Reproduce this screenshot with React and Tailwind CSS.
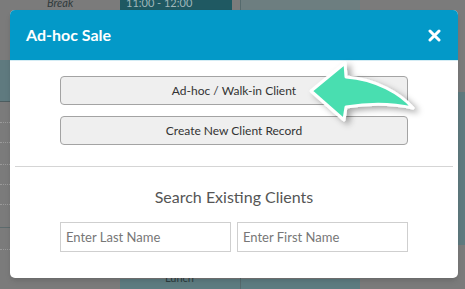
import React from "react";

function Arrow() {
  return (
    <svg
      className="pointer-events-none absolute left-0 top-0"
      width="465"
      height="289"
      viewBox="0 0 465 289"
    >
      <defs>
        <filter id="arrowShadow" x="-20%" y="-20%" width="160%" height="160%">
          <feDropShadow dx="4" dy="3" stdDeviation="3" floodColor="#000" floodOpacity="0.35" />
        </filter>
      </defs>
      <path
        d="M311 91 L345 63 L346 77 C376 79 401 94 413 108 C395 104 370 103 346 107 L344 120 Z"
        fill="#48deb0"
        stroke="#ffffff"
        strokeWidth="3"
        strokeLinejoin="round"
        filter="url(#arrowShadow)"
      />
    </svg>
  );
}

function Backdrop() {
  return (
    <div className="flex h-full w-full">
      {/* time column */}
      <div className="flex w-[120px] flex-col bg-[#7b7b7b]">
        <div className="h-[60px] pl-[47px] text-[11px] italic leading-[10px] text-[#2f3a3c]">
          <span className="-mt-[2px] block">Break</span>
        </div>
        <div className="h-[42px] border-b border-[#4d5d60] bg-[#5f7a7f]" />
        <div className="h-[21px] border-b border-dotted border-[#9a9a9a]" />
        <div className="h-[20px] border-b border-dotted border-[#9a9a9a]" />
        <div className="h-[22px] border-b border-dotted border-[#9a9a9a]" />
        <div className="h-[20px] border-b border-dotted border-[#9a9a9a]" />
        <div className="h-[20px] border-b border-dotted border-[#9a9a9a]" />
        <div className="h-[23px] border-b border-[#5d6b6d]" />
        <div className="h-[22px] border-b border-dotted border-[#9a9a9a]" />
        <div className="flex-1" />
      </div>
      {/* slot column */}
      <div className="flex w-[120px] flex-col bg-[#7b7b7b]">
        <div className="flex h-[10px]">
          <div className="w-[112px] bg-[#1f5962] pl-[6px] text-[11px] leading-[6px] text-[#9fb7ba]">
            11:00 - 12:00
          </div>
        </div>
        <div className="flex-1" />
        <div className="h-[10px] bg-[#5d7c81] pl-[45px] text-[11px] leading-[18px] text-[#2d3c3f]">
          <span className="-mt-[10px] block">Lunch</span>
        </div>
      </div>
      <div className="flex w-[120px] flex-col border-l border-[#556a6d] bg-[#7b7b7b]">
        <div className="h-[10px] bg-[#6d7e80]" />
        <div className="flex-1" />
        <div className="h-[10px] bg-[#5d7c81]" />
      </div>
      <div className="flex flex-1 flex-col bg-[#7b7b7b]">
        <div className="h-[92px]" />
        <div className="ml-auto h-[153px] w-[8px] bg-[#5f7a7f]" />
      </div>
    </div>
  );
}

export default function App() {
  return (
    <div className="relative h-[289px] w-[465px] overflow-hidden font-['Lato',sans-serif]">
      <Backdrop />

      {/* ================= MODAL ================= */}
      <div className="absolute left-[10px] top-[10px] w-[448px] overflow-hidden rounded-[5px] bg-white shadow-md">
        <div className="flex h-[51px] items-center justify-between border-b border-[#d4ecf4] bg-[#0399c8] pl-[16px] pr-[17px]">
          <h3 className="text-[16px] font-bold text-white">Ad-hoc Sale</h3>
          <svg width="13" height="13" viewBox="0 0 13 13">
            <path d="M2 2 L11 11 M11 2 L2 11" stroke="#fff" strokeWidth="3" strokeLinecap="round" />
          </svg>
        </div>

        <div className="pb-[26px] pt-[15px]">
          <div className="flex flex-col gap-[11px] px-[50px]">
            <button className="h-[29px] rounded-[4px] border border-[#a3a3a3] bg-[#efefef] text-[12px] font-normal text-[#333]">
              Ad-hoc / Walk-in Client
            </button>
            <button className="h-[29px] rounded-[4px] border border-[#a3a3a3] bg-[#efefef] text-[12px] font-normal text-[#333]">
              Create New Client Record
            </button>
          </div>

          <div className="mx-[5px] mt-[21px] h-px bg-[#d5d5d5]" />

          <div className="mt-[18px] text-center text-[16px] leading-[24px] text-[#555]">
            Search Existing Clients
          </div>

          <div className="mt-[13px] flex gap-[6px] px-[50px]">
            <input
              className="h-[30px] w-0 flex-1 border border-[#cfcfcf] px-[5px] text-[13px] text-[#333] outline-none placeholder:text-[#777]"
              placeholder="Enter Last Name"
            />
            <input
              className="h-[30px] w-0 flex-1 border border-[#cfcfcf] px-[5px] text-[13px] text-[#333] outline-none placeholder:text-[#777]"
              placeholder="Enter First Name"
            />
          </div>
        </div>
      </div>

      <Arrow />
    </div>
  );
}
